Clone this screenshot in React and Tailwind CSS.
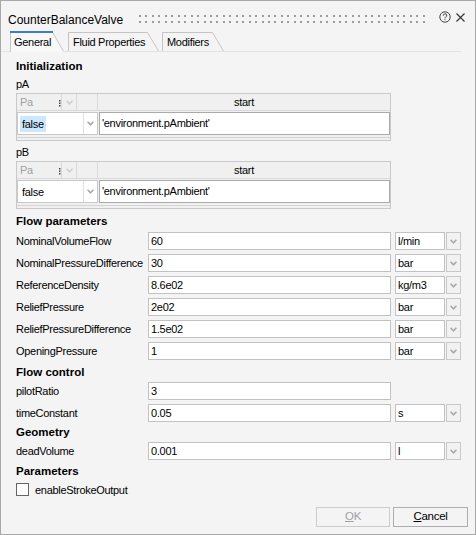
import React from "react";

const Chevron = ({ color = "#a8a8a8" }) => (
  <svg width="7" height="5" viewBox="0 0 7 5">
    <path d="M0.6 0.8 L3.5 3.8 L6.4 0.8" fill="none" stroke={color} strokeWidth="1.6" />
  </svg>
);

function InitTable({ selected }) {
  return (
    <div className="w-[375px] h-[48px] border border-[#c9c9c9] bg-[#f0f0f0] flex flex-col">
      <div className="flex h-[17px] border-b border-[#d9d9d9]">
        <div className="relative w-[45px] flex items-center pl-[3px] text-[#a0a0a0] border-r border-[#d9d9d9]">
          Pa
          <svg className="absolute right-[0px] top-[6px]" width="2" height="7" viewBox="0 0 2 7">
            <rect x="0" y="0" width="1.5" height="1.5" fill="#444" />
            <rect x="0" y="2.5" width="1.5" height="1.5" fill="#444" />
            <rect x="0" y="5" width="1.5" height="1.5" fill="#444" />
          </svg>
        </div>
        <div className="w-[15px] flex items-center justify-center border-r border-[#d9d9d9]">
          <Chevron color="#d0d0d0" />
        </div>
        <div className="w-[21px] border-r border-[#d9d9d9]" />
        <div className="flex-1 flex items-center justify-center text-black">start</div>
      </div>
      <div className="flex h-[26px] py-[1px]">
        <div className="w-[81px] flex border border-[#c8c8c8] bg-white">
          <div className="flex-1 flex items-center pl-[2px]">
            <span className={(selected ? "bg-[#cce8ff] " : "") + "px-[2px] leading-[16px]"}>false</span>
          </div>
          <div className="w-[14px] border-l border-[#e0e0e0] flex items-center justify-center">
            <Chevron />
          </div>
        </div>
        <div className="flex-1 ml-[1px] flex items-center pl-[2px] border border-[#aaaaaa] bg-white">
          'environment.pAmbient'
        </div>
      </div>
      <div className="h-[3px] border-t border-[#d4d4d4] mt-[1px]" />
    </div>
  );
}

function ParamRow({ label, value, unit, className = "" }) {
  return (
    <div className={"flex items-center h-[18px] " + className}>
      <div className="w-[132px] leading-[16px] whitespace-nowrap">{label}</div>
      <div className="w-[243px] h-[18px] border border-[#c2c2c2] bg-white pl-[2px] flex items-center">
        {value}
      </div>
      {unit !== undefined && (
        <>
          <div className="ml-[4px] w-[50px] h-[18px] border border-[#c2c2c2] bg-white pl-[2px] flex items-center">
            {unit}
          </div>
          <div className="ml-[1px] w-[15px] h-[18px] border border-[#c8c8c8] bg-[#f2f2f2] flex items-center justify-center">
            <Chevron />
          </div>
        </>
      )}
    </div>
  );
}

function Heading({ children, className = "" }) {
  return (
    <div className={"h-[16px] leading-[16px] font-bold text-[11.5px] tracking-normal " + className}>
      {children}
    </div>
  );
}

export default function App() {
  const dots = Array.from({ length: 45 }, (_, i) => Math.round(i * 6.45));
  return (
    <div className="w-[476px] h-[535px] border border-[#a9a9a9] bg-[#f4f4f4] flex flex-col text-black font-['Liberation_Sans',Arial,sans-serif] text-[11px] tracking-[-0.3px] overflow-hidden">
      {/* Title bar */}
      <div className="h-[30px] flex items-start pl-[7px]">
        <div className="w-[131px] mt-[12px] text-[12px] tracking-normal leading-[14px] whitespace-nowrap">
          CounterBalanceValve
        </div>
        <svg className="mt-[14px]" width="292" height="9" viewBox="0 0 292 9">
          {dots.map((x) => (
            <g key={x}>
              <rect x={x} y="0" width="2" height="2" fill="#9c9c9c" />
              <rect x={x} y="6" width="2" height="2" fill="#9c9c9c" />
            </g>
          ))}
        </svg>
        <svg className="mt-[10px] ml-[8px]" width="12" height="12" viewBox="0 0 12 12">
          <circle cx="6" cy="6" r="5.2" fill="none" stroke="#444" strokeWidth="1" />
          <path d="M4.4 4.7 A1.7 1.7 0 1 1 6.6 6.1 C6.1 6.4 6 6.7 6 7.3" fill="none" stroke="#444" strokeWidth="1" />
          <rect x="5.5" y="8.2" width="1" height="1" fill="#444" />
        </svg>
        <svg className="mt-[12px] ml-[5px]" width="9" height="9" viewBox="0 0 9 9">
          <path d="M0.5 0.5 L8.5 8.5 M8.5 0.5 L0.5 8.5" stroke="#333" strokeWidth="1.1" />
        </svg>
      </div>

      {/* Tabs */}
      <div className="h-[21px] flex items-end pl-[9px] mr-[14px] border-b border-[#e3e3e3]">
        <div className="relative z-10 -mb-px w-[54px] h-[21px]">
          <svg className="absolute inset-0" width="54" height="21" viewBox="0 0 54 21">
            <polygon points="0,0 43,0 54,21 0,21" fill="#f8f8f8" />
            <path d="M0.5 21 V1" stroke="#c4c4c4" strokeWidth="1" />
            <path d="M42.5 1 L53.5 20.5" stroke="#c4c4c4" strokeWidth="1" />
            <rect x="0" y="0" width="43" height="2" fill="#3a7fc0" />
          </svg>
          <div className="relative pl-[4px] pt-[3px] leading-[16px]">General</div>
        </div>
        <div className="relative ml-[4px] w-[91px] h-[19px]">
          <svg className="absolute inset-0" width="91" height="19" viewBox="0 0 91 19">
            <path d="M0.5 19 V0.5 H79.5 L90.5 19" fill="none" stroke="#c4c4c4" strokeWidth="1" />
          </svg>
          <div className="relative pl-[5px] pt-[2px] leading-[16px] whitespace-nowrap">Fluid Properties</div>
        </div>
        <div className="relative ml-[3px] w-[62px] h-[19px]">
          <svg className="absolute inset-0" width="62" height="19" viewBox="0 0 62 19">
            <path d="M0.5 19 V0.5 H50.5 L61.5 19" fill="none" stroke="#c4c4c4" strokeWidth="1" />
          </svg>
          <div className="relative pl-[5px] pt-[2px] leading-[16px]">Modifiers</div>
        </div>
      </div>

      {/* Content */}
      <div className="flex-1 flex flex-col pl-[15px]">
        <Heading className="mt-[6px]">Initialization</Heading>
        <div className="h-[16px] leading-[16px] mt-[2px]">pA</div>
        <div className="mt-[1px]">
          <InitTable selected />
        </div>
        <div className="h-[16px] leading-[16px] mt-[3px]">pB</div>
        <div className="mt-[1px]">
          <InitTable />
        </div>

        <Heading className="mt-[4px]">Flow parameters</Heading>
        <div className="mt-[3px] flex flex-col gap-[4px]">
          <ParamRow label="NominalVolumeFlow" value="60" unit="l/min" />
          <ParamRow label="NominalPressureDifference" value="30" unit="bar" />
          <ParamRow label="ReferenceDensity" value="8.6e02" unit="kg/m3" />
          <ParamRow label="ReliefPressure" value="2e02" unit="bar" />
          <ParamRow label="ReliefPressureDifference" value="1.5e02" unit="bar" />
          <ParamRow label="OpeningPressure" value="1" unit="bar" />
        </div>

        <Heading className="mt-[4px]">Flow control</Heading>
        <div className="mt-[2px] flex flex-col gap-[4px]">
          <ParamRow label="pilotRatio" value="3" />
          <ParamRow label="timeConstant" value="0.05" unit="s" />
        </div>

        <Heading className="mt-[2px]">Geometry</Heading>
        <ParamRow className="mt-[2px]" label="deadVolume" value="0.001" unit="l" />

        <Heading className="mt-[3px]">Parameters</Heading>
        <div className="mt-[2px] h-[17px] flex items-center">
          <div className="w-[13px] h-[13px] border border-[#666] bg-white" />
          <div className="ml-[6px] leading-[16px]">enableStrokeOutput</div>
        </div>

        <div className="flex-1" />

        <div className="flex justify-end mb-[7px] mr-[7px]">
          <div className="w-[74px] h-[20px] border border-[#cccccc] bg-[#f4f4f4] flex items-center justify-center text-[#a0a0a0] text-[11.5px]">
            <span><span className="underline">O</span>K</span>
          </div>
          <div className="ml-[3px] w-[75px] h-[20px] border border-[#adadad] bg-[#f4f4f4] flex items-center justify-center text-[11.5px]">
            <span><span className="underline">C</span>ancel</span>
          </div>
        </div>
      </div>
    </div>
  );
}
